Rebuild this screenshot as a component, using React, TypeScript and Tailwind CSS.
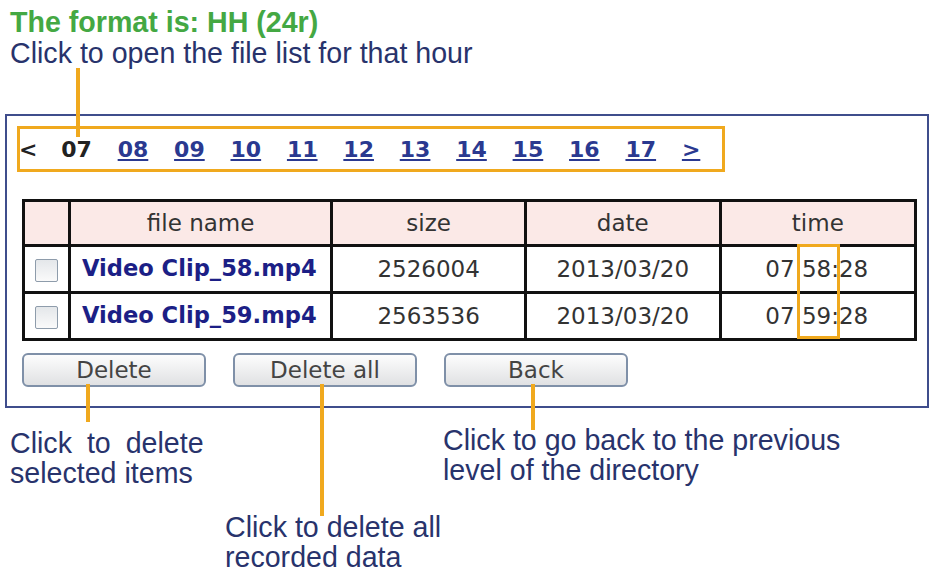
const hours = ["08", "09", "10", "11", "12", "13", "14", "15", "16", "17"];

const files = [
  { name: "Video Clip_58.mp4", size: "2526004", date: "2013/03/20", hh: "07", mm: "58", ss: "28" },
  { name: "Video Clip_59.mp4", size: "2563536", date: "2013/03/20", hh: "07", mm: "59", ss: "28" },
];

function Leader({ className }: { className: string }) {
  return <div className={"absolute w-[4px] bg-[#f0a91e] " + className} />;
}

function Btn({ label }: { label: string }) {
  return (
    <button className="h-[34px] w-[184px] rounded-[6px] border-2 border-[#7f90a8] bg-linear-to-b from-[#fdfdfd] to-[#e0e1e3] text-[23px] leading-none text-[#444]">
      {label}
    </button>
  );
}

export default function App() {
  const cell = "border-[3px] border-[#111]";
  return (
    <div className="relative h-[574px] w-[934px] overflow-hidden bg-white font-['Liberation_Sans',Arial,sans-serif]">
      <div className="pl-[10px] pt-[7px] text-[28.6px] leading-[31px]">
        <p className="font-bold text-[#44a843]">The format is: HH (24r)</p>
        <p className="text-[#28336c]">Click to open the file list for that hour</p>
      </div>

      <section className="ml-[5px] mt-[45px] h-[294px] w-[924px] border-2 border-[#3f4d8c] px-[10px] pt-[10px] font-['DejaVu_Sans',Verdana,sans-serif]">
        <nav className="flex h-[46px] w-[708px] items-center gap-[25.8px] border-[3px] border-[#f0a91e] text-[22px] font-bold">
          <span className="-ml-[1px] -mr-[2px] text-[#222]">&lt;</span>
          <span className="text-[#222]">07</span>
          {hours.map((h) => (
            <a key={h} className="text-[#2a3990] underline">
              {h}
            </a>
          ))}
          <a className="text-[#2a3990] underline">&gt;</a>
        </nav>

        <div className="relative ml-[5px] mt-[27px] w-fit">
          <table className="border-collapse text-[23px] text-[#333]">
            <thead>
              <tr className="h-[45px] bg-[#fbe9e7]">
                <th className={cell + " w-[46px]"}></th>
                <th className={cell + " w-[263px] font-normal"}>file name</th>
                <th className={cell + " w-[194px] font-normal"}>size</th>
                <th className={cell + " w-[195px] font-normal"}>date</th>
                <th className={cell + " w-[196px] font-normal"}>time</th>
              </tr>
            </thead>
            <tbody>
              {files.map((f) => (
                <tr key={f.name} className="h-[47px]">
                  <td className={cell + " text-center"}>
                    <span className="inline-block h-[23px] w-[23px] rounded-[2px] border border-[#8e9cab] bg-linear-to-b from-[#e4e7ea] to-[#fafafa] align-middle" />
                  </td>
                  <td className={cell + " pl-[11px] text-[22.6px] font-bold text-[#1c1f86]"}>{f.name}</td>
                  <td className={cell + " text-center"}>{f.size}</td>
                  <td className={cell + " text-center"}>{f.date}</td>
                  <td className={cell + " pr-[2px] text-center"}>
                    {f.hh} {f.mm}:{f.ss}
                  </td>
                </tr>
              ))}
            </tbody>
          </table>
          <div className="absolute left-[775px] top-[45px] h-[95px] w-[43px] border-[3px] border-[#f0a91e]" />
        </div>

        <div className="ml-[5px] mt-[12px] flex gap-[27px]">
          <Btn label="Delete" />
          <Btn label="Delete all" />
          <Btn label="Back" />
        </div>
      </section>

      <div className="mt-[17px] flex text-[28.6px] leading-[30px] text-[#28336c]">
        <div className="mt-[3px] w-[225px] shrink-0 pl-[10px]">
          <p className="whitespace-nowrap [word-spacing:7px]">Click to delete</p>
          <p className="whitespace-nowrap">selected items</p>
        </div>
        <div className="mt-[87px] w-[218px] shrink-0">
          <p className="whitespace-nowrap">Click to delete all</p>
          <p className="whitespace-nowrap">recorded data</p>
        </div>
        <div>
          <p className="whitespace-nowrap">Click to go back to the previous</p>
          <p className="whitespace-nowrap">level of the directory</p>
        </div>
      </div>

      <Leader className="left-[76px] top-[68px] h-[69px]" />
      <Leader className="left-[86px] top-[384px] h-[38px]" />
      <Leader className="left-[320px] top-[384px] h-[132px]" />
      <Leader className="left-[531px] top-[384px] h-[46px]" />
    </div>
  );
}
